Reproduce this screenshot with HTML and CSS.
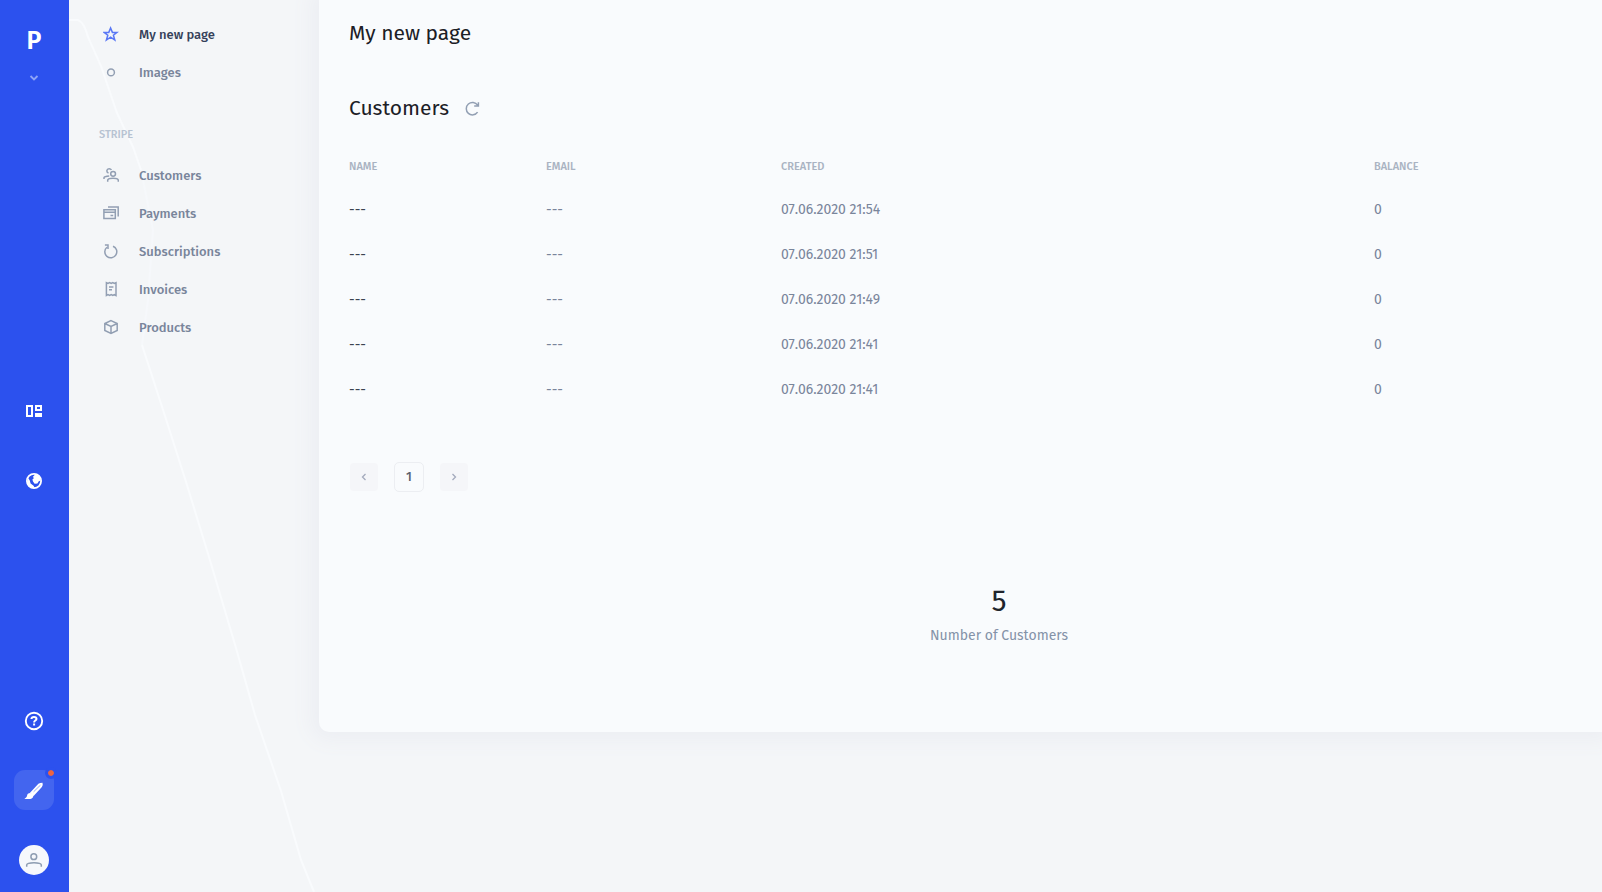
FILE: index.html
```
<!DOCTYPE html>
<html lang="en">
<head>
<meta charset="utf-8">
<title>My new page</title>
<link rel="stylesheet" href="styles.css">
</head>
<body>
<div class="app">
  <svg class="backdrop" viewBox="0 0 1602 892" fill="none"><path d="M69 20H78Q84 22 88 37L101 66L117 113L133 147L141 170"/><path class="faint" d="M141 170L153 230L148 300L142 345"/><path d="M142 345L165 416L187 485L209 557L236 648L255 715L281 791L301 860L314 892"/></svg>
  <aside class="rail">
    <div class="logo">P</div>
    <svg class="caret" width="10" height="6" viewBox="0 0 10 6"><path d="M1.5 1L5 4.4L8.5 1"/></svg>
    <a class="rail-link layout"><svg width="16" height="12" viewBox="0 0 16 12" fill="none" stroke="#fff" stroke-width="2"><path d="M1 1H6V11H1ZM10 1H15V5H10ZM10 9H15V11H10Z"/></svg></a>
    <a class="rail-link globe"><svg width="16" height="16" viewBox="0 0 16 16"><circle cx="8" cy="8" r="7.1" fill="none" stroke="#fff" stroke-width="1.8"/><path d="M9.5 1L6.8 4L8 5L6.4 6.6L7 8.6L8.6 10.8L11.4 10.5L12.8 8.2L14.8 7.4L13.6 3.5Z" fill="#fff"/><path d="M2 4.8L3.8 7.5L4.6 10.6L7.6 12.8L8.8 15L4 14L1 10Z" fill="#fff"/></svg></a>
    <a class="rail-link help"><svg width="20" height="20" viewBox="0 0 20 20" fill="none" stroke="#fff"><circle cx="10" cy="10" r="8.2" stroke-width="1.9"/><path d="M7.4 8Q7.6 5.9 10 5.9Q12.5 5.9 12.5 7.9C12.5 9.6 10.1 9.5 10.1 11.4M10.1 12.6V14.6" stroke-width="2"/></svg></a>
    <a class="rail-tile"><svg width="20" height="18" viewBox="0 0 20 18" fill="#fff"><path d="M.4 17Q3.2 15.5 3.6 12.1Q6.4 9.6 9.6 12.6Q9.4 16.7 6.3 17Z"/><path d="M5.8 11L14.4 1.7Q16 .8 18.5.8Q19.3 3.2 17.9 5.1L9.6 14Q8.4 12 5.8 11Z"/><path d="M9.6 9.8L16.4 3.2" fill="none" stroke="#7d95f4" stroke-width=".8"/></svg><i class="dot"></i></a>
    <a class="avatar"><svg width="18" height="18" viewBox="0 0 18 18" fill="none" stroke="#8e9db2" stroke-width="1.5"><circle cx="8.8" cy="5.7" r="2.9"/><path d="M1.7 15.7V13.9Q2.2 11.8 9 11.8T16.3 13.9V15.7"/></svg></a>
  </aside>
  <nav class="nav">
    <a class="item active"><svg class="ico" viewBox="0 0 16 16"><path d="M7.6 2L9.4 6.4H14L10.4 9.2L11.8 14L7.6 11.2L3.4 14L4.8 9.2L1.2 6.4H5.8Z"/></svg><span>My new page</span></a>
    <a class="item images"><svg class="ico" viewBox="0 0 16 16"><circle cx="8" cy="8.4" r="3.4"/></svg><span>Images</span></a>
    <h3 class="group">STRIPE</h3>
    <a class="item customers"><svg class="ico" viewBox="0 0 16 16"><circle cx="10.1" cy="6.8" r="2.4"/><path d="M4.7 14.8V13Q5.3 11.3 10 11.3T15.3 13V14.8M8.4 3Q7.8 1.7 6.1 1.7C3.4 1.7 3.1 5.2 5.5 6M1 12V10.6Q1.4 9.1 6.2 8.9"/></svg><span>Customers</span></a>
    <a class="item payments"><svg class="ico" viewBox="0 0 16 16"><path d="M.9 4.8H12.3V13.4H.9ZM.9 7.2H12.3M7.5 10.5H10.2M5 2H15.2V11.4"/></svg><span>Payments</span></a>
    <a class="item subscriptions"><svg class="ico" viewBox="0 0 16 16"><path d="M10 3.2A6 6 0 1 1 3.9 4.2M1.9 2.1H5V6"/></svg><span>Subscriptions</span></a>
    <a class="item invoices"><svg class="ico" viewBox="0 0 16 16"><path d="M3.4 1.7L5 2.5L6.6 1.7L8.2 2.5L9.8 1.7L11.3 2.5L13 1.7V14.5L11.3 13.7L9.8 14.5L8.2 13.7L6.6 14.5L5 13.7L3.4 14.5ZM6 6H10.4M6 8.8H9"/></svg><span>Invoices</span></a>
    <a class="item products"><svg class="ico" viewBox="0 0 16 16"><path d="M8 1.6L14.2 4.5V11.5L8 14.5L1.8 11.5V4.5ZM1.8 4.5L8 7.5L14.2 4.5M8 7.5V14.5"/></svg><span>Products</span></a>
  </nav>
  <main class="card">
    <h1 class="title">My new page</h1>
    <div class="section">
      <h2 class="subtitle">Customers</h2>
      <svg class="refresh" width="16" height="16" viewBox="0 0 16 16"><path d="M13.6 5.2A6.2 6.2 0 1 0 13.6 12.2M10.2 6H14.4V2.3"/></svg>
    </div>
    <div class="row head"><span class="w-name">NAME</span><span class="w-email">EMAIL</span><span class="w-created">CREATED</span><span class="w-balance">BALANCE</span></div>
    <div class="row"><b>---</b><span>---</span><span class="date">07.06.2020 21:54</span><span>0</span></div>
    <div class="row"><b>---</b><span>---</span><span class="date">07.06.2020 21:51</span><span>0</span></div>
    <div class="row"><b>---</b><span>---</span><span class="date">07.06.2020 21:49</span><span>0</span></div>
    <div class="row"><b>---</b><span>---</span><span class="date">07.06.2020 21:41</span><span>0</span></div>
    <div class="row"><b>---</b><span>---</span><span class="date">07.06.2020 21:41</span><span>0</span></div>
    <div class="pager">
      <a class="step"><svg width="6" height="8" viewBox="0 0 6 8"><path d="M4.5 1L1.5 4L4.5 7"/></svg></a>
      <a class="page">1</a>
      <a class="step"><svg width="6" height="8" viewBox="0 0 6 8"><path d="M1.5 1L4.5 4L1.5 7"/></svg></a>
    </div>
    <div class="metric"><div class="value">5</div><div class="label">Number of Customers</div></div>
  </main>
</div>
</body>
</html>
```
FILE: styles.css
```
* { box-sizing: border-box; margin: 0; padding: 0; }
body { width: 1602px; height: 892px; overflow: hidden; font-family: "Fira Sans", "Noto Sans", sans-serif; }
.app { position: relative; display: flex; align-items: flex-start; width: 1602px; height: 892px; overflow: hidden; background: #f4f6f8; }
.backdrop { position: absolute; inset: 0; width: 1602px; height: 892px; }
.backdrop path { stroke: #f9fbfd; stroke-width: 2; }
.backdrop .faint { stroke: #f6f8fb; }

.rail { z-index: 1; display: flex; flex: none; flex-direction: column; align-items: center; width: 69px; height: 892px; padding: 26px 1px 0 0; background: #2c51ee; }
.rail svg { display: block; }
.logo { height: 30px; color: #fff; font-size: 25px; font-weight: 600; line-height: 30px; }
.caret { margin-top: 19px; fill: none; stroke: #8fa4f7; stroke-width: 1.9; }
.layout { margin-top: 324px; }
.globe { margin-top: 56px; }
.help { margin-top: 222px; }
.rail-tile { position: relative; display: flex; align-items: center; justify-content: center; width: 40px; height: 40px; margin-top: 39px; border-radius: 11px; background: #4365ef; }
.rail-tile svg { margin-top: 2px; }
.dot { position: absolute; top: -3px; right: -3px; width: 12px; height: 12px; border: 3px solid #2c51ee; border-radius: 50%; background: #ed6440; background-clip: padding-box; }
.avatar { display: flex; align-items: center; justify-content: center; width: 30px; height: 30px; margin-top: 35px; border-radius: 50%; background: #f6f8fc; }

.nav { position: relative; flex: none; width: 250px; padding: 15px 0 0 30px; }
.item { display: flex; align-items: center; height: 38px; padding-left: 4px; color: #79859b; font-size: 13px; font-weight: 500; }
.item span { margin-left: 20px; }
.ico { width: 16px; height: 16px; fill: none; stroke: #929fb3; stroke-width: 1.5; }
.active { color: #35415a; }
.active .ico { stroke: #5a78f5; }
.group { height: 16px; margin: 36px 0 13px; color: #b7c3d2; font-size: 11px; font-weight: 500; line-height: 16px; }

.card { position: relative; flex: none; width: 1283px; height: 732px; padding-left: 30px; border-bottom-left-radius: 10px; background: #f9fbfd; box-shadow: 0 0 20px 8px #eceef3; }
.title, .subtitle { color: #1c2026; font-size: 21px; font-weight: 400; line-height: 30px; }
.title { padding-top: 18px; }
.section { display: flex; align-items: center; height: 30px; margin-top: 45px; }
.refresh { margin-left: 15px; fill: none; stroke: #929fb3; stroke-width: 1.5; }
.row { display: grid; grid-template-columns: 197px 235px 593px 1fr; align-items: center; height: 45px; color: #79859b; font-size: 14px; }
.row b { color: #3c4350; font-weight: 400; }
.head { height: 20px; margin: 33px 0 11px; color: #a9b3c2; font-size: 11px; font-weight: 500; }
.pager { display: flex; align-items: center; height: 30px; margin-top: 50px; padding-left: 1px; gap: 16px; }
.pager a { display: flex; align-items: center; justify-content: center; }
.step { width: 28px; height: 28px; border-radius: 4px; background: #f5f6f9; }
.step svg { fill: none; stroke: #a3aabd; stroke-width: 1.3; }
.page { width: 30px; height: 30px; padding-bottom: 2px; border: 1px solid #eceef2; border-radius: 5px; color: #5c6370; font-size: 13px; font-weight: 500; }
.metric { width: 1300px; margin-top: 89px; text-align: center; }
.value { height: 40px; color: #20242b; font-size: 30px; line-height: 40px; }
.label { height: 24px; margin-top: 3px; color: #8492a8; font-size: 14px; line-height: 24px; }
```
